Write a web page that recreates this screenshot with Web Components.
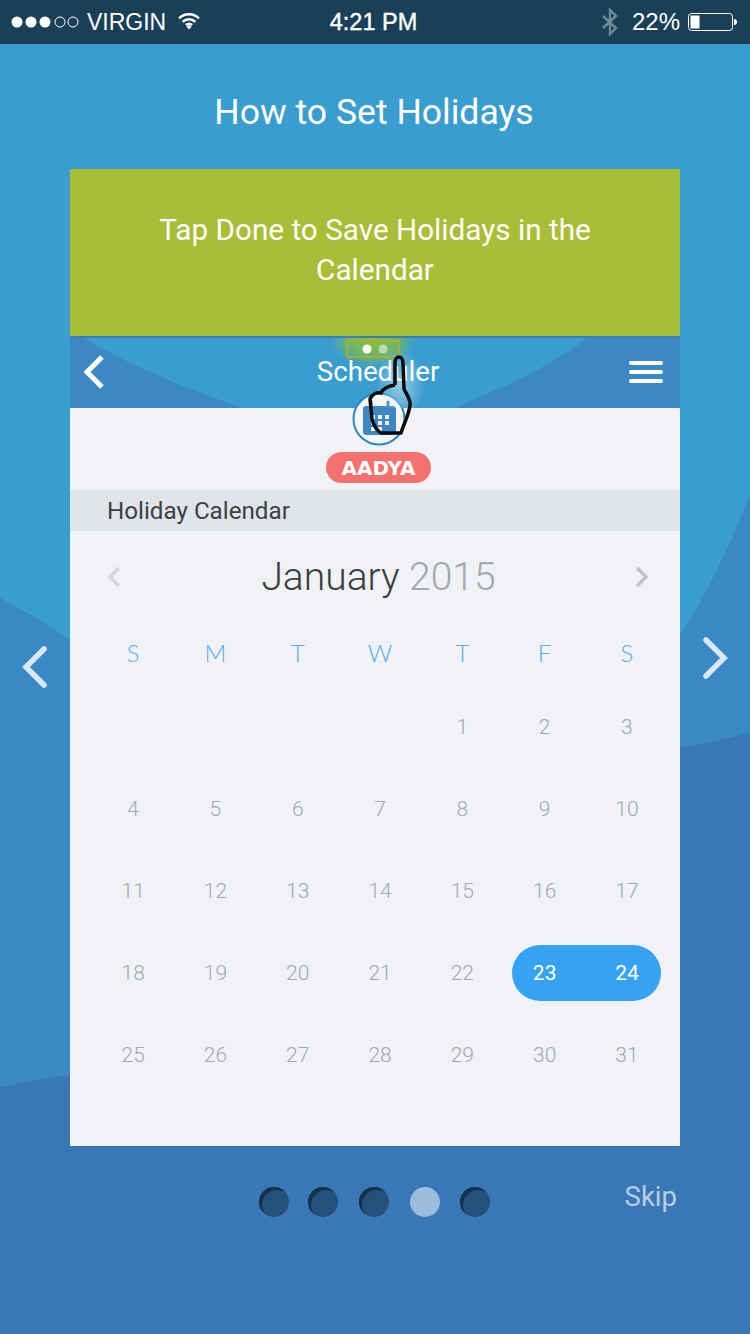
<!DOCTYPE html>
<html>
<head>
<meta charset="utf-8">
<title>How to Set Holidays</title>
<style>
  html, body { margin: 0; padding: 0; }
  body { width: 750px; height: 1334px; overflow: hidden; font-family: Roboto, "Liberation Sans", sans-serif; }
</style>
</head>
<body>
<tutorial-screen>
  <status-bar></status-bar>
  <tutorial-card>
    <span slot="hint">Tap Done to Save Holidays in the<br>Calendar</span>
    <app-nav></app-nav>
    <user-badge></user-badge>
    <holiday-calendar></holiday-calendar>
    <tap-hint></tap-hint>
  </tutorial-card>
  <page-dots></page-dots>
</tutorial-screen>

<script>
class TutorialScreen extends HTMLElement {
  constructor() {
    super();
    this.attachShadow({ mode: 'open' });
    this.shadowRoot.innerHTML = `
    <style>
      :host { display: block; position: relative; width: 750px; height: 1334px; overflow: hidden; background: #3a77b6; color: #fff; }
      .bg { position: absolute; left: 0; top: 0; }
      .content { position: relative; display: flex; flex-direction: column; height: 100%; }
    </style>
    <svg class="bg" width="750" height="1334" viewBox="0 0 750 1334">
      <path d="M0 0H750V733C725 739 700 745 680 748L70 1075C45 1079 20 1083 0 1087Z" fill="#3a88c4"/>
      <path d="M0 0H750V495C727 552 705 597 680 635L70 640C45 622 22 610 0 598Z" fill="#3a9dd0"/>
    </svg>
    <div class="content">
      <slot></slot>
    </div>`;
  }
}

class StatusBar extends HTMLElement {
  constructor() {
    super();
    this.attachShadow({ mode: 'open' });
    this.shadowRoot.innerHTML = `
    <style>
      :host { display: grid; grid-template-columns: 1fr auto 1fr; align-items: center; height: 44px; background: #1a4057; color: #fff; font: 400 24px "Liberation Sans", Arial, sans-serif; }
      .left, .right { display: flex; align-items: center; }
      .left { padding-left: 11px; }
      .right { justify-content: flex-end; padding-right: 12px; }
      .time { font-size: 23.5px; -webkit-text-stroke: .4px #fff; margin-left: -3px; }
      .carrier { margin-left: 8px; font-size: 23px; }
      .wifi { margin: -2px 0 0 12px; }
      .pct { margin: 0 8px 0 14px; }
    </style>
    <div class="left">
      <svg width="68" height="14" viewBox="0 0 68 14">
        <circle cx="6" cy="7" r="5.5" fill="#fff"/>
        <circle cx="20" cy="7" r="5.5" fill="#fff"/>
        <circle cx="34" cy="7" r="5.5" fill="#fff"/>
        <circle cx="49" cy="7" r="5" fill="none" stroke="#fff"/>
        <circle cx="62" cy="7" r="5" fill="none" stroke="#fff"/>
      </svg>
      <span class="carrier">VIRGIN</span>
      <svg class="wifi" width="22" height="18" viewBox="0 0 24 20" fill="none" stroke="#fff" stroke-width="2.8">
        <path d="M1 7C7 1 17 1 23 7"/>
        <path d="M5 11C9 7 15 7 19 11"/>
        <path d="M8.5 14.5C10.5 12.8 13.5 12.8 15.5 14.5"/>
        <path d="M9 16.5L12 14.5L15 16.5L12 19.5Z" fill="#fff" stroke="none"/>
      </svg>
    </div>
    <div class="time">4:21 PM</div>
    <div class="right">
      <svg width="16" height="28" viewBox="0 0 16 28" fill="none" stroke="#6e8a99" stroke-width="2.4">
        <path d="M1 8L14 20L8 26V2L14 8L1 20"/>
      </svg>
      <span class="pct">22%</span>
      <svg width="50" height="20" viewBox="0 0 50 20">
        <rect x=".5" y="1.5" width="44" height="17" rx="3" fill="none" stroke="#fff"/>
        <rect x="2.5" y="3.5" width="9" height="13" fill="#fff"/>
        <path d="M46 7C48 7 49 8 49 10C49 12 48 13 46 13Z" fill="#fff"/>
      </svg>
    </div>`;
  }
}

class TutorialCard extends HTMLElement {
  constructor() {
    super();
    this.attachShadow({ mode: 'open' });
    this.shadowRoot.innerHTML = `
    <style>
      :host { display: block; }
      h1 { margin: 0; height: 125px; box-sizing: border-box; padding: 10px 2px 0 0; display: flex; align-items: center; justify-content: center; font: 400 35.6px Roboto, sans-serif; color: #fff; }
      .row { display: grid; grid-template-columns: 70px 610px 70px; }
      .arrow svg { display: block; }
      .arrow.prev svg { margin-top: 468px; }
      .arrow.next svg { margin-top: 459px; }
      .card { position: relative; display: flex; flex-direction: column; height: 977px; background: #f0f2f6; }
      .hint { flex: none; height: 167px; box-sizing: border-box; padding-bottom: 6px; display: flex; align-items: center; justify-content: center; text-align: center; background: #a9bd36; color: #fff; font: 400 29.7px/40px Roboto, sans-serif; }
    </style>
    <h1>How to Set Holidays</h1>
    <div class="row">
      <div class="arrow prev">
        <svg width="70" height="60" viewBox="0 0 70 60" fill="none" stroke="#d8e8f5" stroke-width="5.5" stroke-linecap="round"><path d="M44 12L26 30L44 48"/></svg>
      </div>
      <div class="card">
        <div class="hint"><slot name="hint"></slot></div>
        <slot></slot>
      </div>
      <div class="arrow next">
        <svg width="70" height="60" viewBox="0 0 70 60" fill="none" stroke="#d8e8f5" stroke-width="5.5" stroke-linecap="round"><path d="M26 12L44 30L26 48"/></svg>
      </div>
    </div>`;
  }
}

class AppNav extends HTMLElement {
  constructor() {
    super();
    this.attachShadow({ mode: 'open' });
    this.shadowRoot.innerHTML = `
    <style>
      :host { display: grid; grid-template-columns: 1fr auto 1fr; position: relative; flex: none; align-items: center; height: 70px; border-top: 2px solid #3a7dbd; background: #3b88c4; color: #fff; }
      .shape { position: absolute; left: 0; top: 0; }
      .back, .title, .menu { position: relative; }
      .back { margin: -3px 0 0 13px; display: block; }
      .title { margin: 0 0 4px 6px; font: 400 27.7px Roboto, sans-serif; }
      .menu { margin: -3px 17px 0 auto; display: block; }
    </style>
    <svg class="shape" width="610" height="70" viewBox="0 0 610 70">
      <path d="M14 0C60 28 115 50 173 70H385C430 50 480 30 517 0Z" fill="#3a9dd0"/>
    </svg>
    <svg class="back" width="22" height="34" viewBox="0 0 22 34" fill="none" stroke="#fff" stroke-width="5"><path d="M19 2L4 17L19 32"/></svg>
    <span class="title">Scheduler</span>
    <svg class="menu" width="34" height="24" viewBox="0 0 34 24" stroke="#fff" stroke-width="4" stroke-linecap="round"><path d="M2 3H32M2 12H32M2 21H32"/></svg>`;
  }
}

class UserBadge extends HTMLElement {
  constructor() {
    super();
    this.attachShadow({ mode: 'open' });
    this.shadowRoot.innerHTML = `
    <style>
      :host { display: flex; flex: none; position: relative; flex-direction: column; align-items: center; margin: -16px 0 7px; padding-left: 7px; }
      .avatar { display: block; }
      .name { margin-top: 6px; width: 105px; height: 31px; box-sizing: border-box; border-radius: 16px; background: #f4716f; color: #fff; display: flex; align-items: center; justify-content: center; font: 700 20px "DejaVu Sans", sans-serif; }
    </style>
    <svg class="avatar" width="54" height="54" viewBox="0 0 54 54">
      <circle cx="27" cy="27" r="25.5" fill="#f5f6f8" stroke="#2e86c1" stroke-width="2"/>
      <rect x="11" y="14" width="33" height="29" rx="3" fill="#3b88c4"/>
      <path d="M19 10V17M36 10V17" stroke="#3b88c4" stroke-width="3" stroke-linecap="round"/>
      <path d="M19 23h4v4h-4zM26 23h4v4h-4zM33 23h4v4h-4zM19 29h4v4h-4zM26 29h4v4h-4zM33 29h4v4h-4zM19 35h4v4h-4zM26 35h4v4h-4z" fill="#f0f2f6"/>
    </svg>
    <div class="name">AADYA</div>`;
  }
}

class HolidayCalendar extends HTMLElement {
  constructor() {
    super();
    this.attachShadow({ mode: 'open' });
    const days = ['S', 'M', 'T', 'W', 'T', 'F', 'S'];
    let cells = '';
    for (let d = 1; d <= 31; d++) {
      const sel = d === 23 || d === 24;
      const col = (d + 3) % 7 + 1;
      const row = Math.floor((d + 3) / 7) + 1;
      cells += `<span class="${sel ? 'sel' : ''}" style="grid-column:${col};grid-row:${row}">${d}</span>`;
    }
    this.shadowRoot.innerHTML = `
    <style>
      :host { display: flex; flex-direction: column; flex: 1; }
      .band { height: 41px; background: #e1e4e9; color: #3c4146; display: flex; align-items: center; padding-left: 37px; font: 400 24.2px Roboto, sans-serif; }
      .month { height: 92px; display: flex; align-items: center; justify-content: space-between; padding: 0 31px 0 37px; }
      .label { font: 300 39px Roboto, sans-serif; color: #3a3d42; margin-left: 1px; }
      .label em { font-style: normal; color: #a4a8ae; }
      .week, .days { display: grid; grid-template-columns: repeat(7, 82.3px); padding-left: 22px; text-align: center; }
      .week { height: 58px; align-items: center; margin-bottom: 5px; color: #55ade9; font: 300 24px Lato, sans-serif; }
      .days { grid-auto-rows: 82px; align-items: center; color: #a3a7ad; font: 300 21px Roboto, sans-serif; }
      .days span { position: relative; }
      .days .sel { color: #fff; font-weight: 400; }
      .pill { grid-column: 6 / 8; grid-row: 4; height: 56px; margin: 0 7px 0 9px; border-radius: 28px; background: #36a3f2; }
    </style>
    <div class="band">Holiday Calendar</div>
    <div class="month">
      <svg width="14" height="22" viewBox="0 0 14 22" fill="none" stroke="#d3d6da" stroke-width="3.5"><path d="M12 2L3 11L12 20"/></svg>
      <span class="label">January <em>2015</em></span>
      <svg width="14" height="22" viewBox="0 0 14 22" fill="none" stroke="#c0c3c8" stroke-width="3.5"><path d="M2 2L11 11L2 20"/></svg>
    </div>
    <div class="week">${days.map(d => `<span>${d}</span>`).join('')}</div>
    <div class="days"><div class="pill"></div>${cells}</div>`;
  }
}

// the pointer that sits over the nav bar, it belongs to no row
class TapHint extends HTMLElement {
  constructor() {
    super();
    this.attachShadow({ mode: 'open' });
    this.shadowRoot.innerHTML = `
    <style>
      :host { position: absolute; left: 230px; top: 150px; width: 150px; height: 130px; display: block; }
      svg { display: block; }
    </style>
    <svg width="150" height="130" viewBox="230 150 150 130">
      <defs>
        <radialGradient id="glow">
          <stop offset="0" stop-color="#8cc232" stop-opacity="1"/>
          <stop offset=".6" stop-color="#8cc232" stop-opacity=".6"/>
          <stop offset="1" stop-color="#8cc232" stop-opacity="0"/>
        </radialGradient>
        <radialGradient id="glow2">
          <stop offset="0" stop-color="#d8ecf0" stop-opacity=".6"/>
          <stop offset="1" stop-color="#d8ecf0" stop-opacity="0"/>
        </radialGradient>
        <clipPath id="navclip"><rect x="230" y="169" width="150" height="70"/></clipPath>
      </defs>
      <g clip-path="url(#navclip)">
        <ellipse cx="303" cy="172" rx="42" ry="26" fill="url(#glow)"/>
        <ellipse cx="330" cy="215" rx="24" ry="36" fill="url(#glow2)"/>
      </g>
      <rect x="277" y="172" width="52" height="16" fill="none" stroke="#a9ae2e" stroke-width="2"/>
      <circle cx="297" cy="180" r="4.500" fill="#fff"/>
      <circle cx="313" cy="180" r="4.500" fill="#fff" fill-opacity=".5"/>
      <path d="M325 216V194C325 186 333 186 333 194L334 220C337 226 341 231 340 236C339 246 334 254 331 264H311C307 262 303 255 302 250L300 230C302 225 307 223 311 224C313 219 318 217 325 216"
        fill="none" stroke="#0c0c0c" stroke-width="3.5" stroke-linejoin="round"/>
    </svg>`;
  }
}

class PageDots extends HTMLElement {
  constructor() {
    super();
    this.attachShadow({ mode: 'open' });
    this.shadowRoot.innerHTML = `
    <style>
      :host { display: flex; position: relative; align-items: center; height: 112px; padding-left: 259px; }
      .dot { width: 30px; height: 30px; border-radius: 50%; background: #255079; box-shadow: inset 3px 3px 0 #14304a; margin-right: 20px; }
      .dot:nth-of-type(1) { margin-right: 19px; }
      .dot:nth-of-type(2), .dot:nth-of-type(3) { margin-right: 21px; }
      .dot.on { background: #9bbcdc; box-shadow: none; }
      .skip { margin: -12px 73px 0 auto; color: #b7cde3; font: 400 27.500px Roboto, sans-serif; }
    </style>
    <div class="dot"></div>
    <div class="dot"></div>
    <div class="dot"></div>
    <div class="dot on"></div>
    <div class="dot"></div>
    <span class="skip">Skip</span>`;
  }
}

customElements.define('tutorial-screen', TutorialScreen);
customElements.define('status-bar', StatusBar);
customElements.define('tutorial-card', TutorialCard);
customElements.define('app-nav', AppNav);
customElements.define('user-badge', UserBadge);
customElements.define('holiday-calendar', HolidayCalendar);
customElements.define('tap-hint', TapHint);
customElements.define('page-dots', PageDots);
</script>
</body>
</html>
